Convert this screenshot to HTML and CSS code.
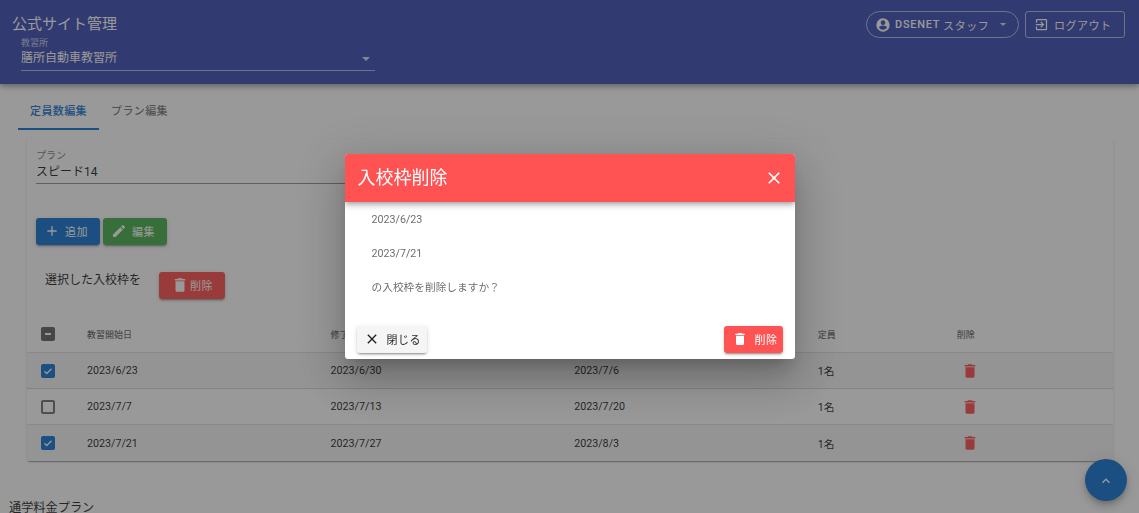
FILE: index.html
```html
<!DOCTYPE html>
<html lang="ja">
<head>
<meta charset="utf-8">
<title>公式サイト管理</title>
<link rel="stylesheet" href="styles.css">
</head>
<body>
<div class="app">
  <header class="appbar">
    <div class="appbar-left">
      <div class="app-title">公式サイト管理</div>
      <div class="select dark">
        <div class="select-label">教習所</div>
        <div class="select-value"><span>膳所自動車教習所</span><i class="caret"></i></div>
      </div>
    </div>
    <div class="appbar-right">
      <button class="pill-btn">
        <svg class="ic16" viewBox="0 0 24 24"><path d="M12 2a10 10 0 1 0 0 20 10 10 0 0 0 0-20zm0 3a3.5 3.5 0 1 1 0 7 3.500 3.500 0 0 1 0-7zm0 14.200a7.200 7.200 0 0 1-6-3.220c.03-2 4-3.080 6-3.080s5.970 1.080 6 3.080a7.200 7.200 0 0 1-6 3.220z"/></svg>
        <b>DSENET</b><span>スタッフ</span><i class="caret small"></i>
      </button>
      <button class="out-btn">
        <svg class="ic15" viewBox="0 0 24 24"><path d="M10.090 15.590 11.500 17l5-5-5-5-1.410 1.410L12.670 11H3v2h9.670l-2.580 2.590zM19 3H5a2 2 0 0 0-2 2v4h2V5h14v14H5v-4H3v4a2 2 0 0 0 2 2h14a2 2 0 0 0 2-2V5a2 2 0 0 0-2-2z"/></svg>
        <span>ログアウト</span>
      </button>
    </div>
  </header>

  <nav class="tabs">
    <a class="tab active">定員数編集</a>
    <a class="tab">プラン編集</a>
  </nav>

  <section class="card">
    <div class="select plan">
      <div class="select-label">プラン</div>
      <div class="select-value"><span>スピード14</span></div>
    </div>
    <div class="btn-row">
      <button class="btn blue"><svg class="ic16" viewBox="0 0 24 24"><path d="M19 13h-6v6h-2v-6H5v-2h6V5h2v6h6v2z"/></svg><span>追加</span></button>
      <button class="btn green"><svg class="ic16" viewBox="0 0 24 24"><path d="M3 17.250V21h3.750L17.810 9.940l-3.750-3.750L3 17.250zM20.710 7.040a1 1 0 0 0 0-1.410l-2.340-2.340a1 1 0 0 0-1.410 0l-1.830 1.830 3.750 3.750 1.830-1.830z"/></svg><span>編集</span></button>
    </div>
    <div class="bulk-row">
      <span class="bulk-text">選択した入校枠を</span>
      <button class="btn red tight"><svg class="ic18" viewBox="0 0 24 24"><path d="M6 19a2 2 0 0 0 2 2h8a2 2 0 0 0 2-2V7H6v12zM19 4h-3.500l-1-1h-5l-1 1H5v2h14V4z"/></svg><span>削除</span></button>
    </div>
    <div class="table">
      <div class="tr th">
        <div class="c-check"><i class="cb dash"></i></div><div class="c-date">教習開始日</div><div class="c-date">修了</div><div class="c-date"></div><div class="c-cap">定員</div><div class="c-del">削除</div>
      </div>
      <div class="tr sel">
        <div class="c-check"><i class="cb on"><svg viewBox="0 0 24 24"><path d="M5 12.500l4.500 4.500L19 7.500"/></svg></i></div><div class="c-date">2023/6/23</div><div class="c-date">2023/6/30</div><div class="c-date">2023/7/6</div><div class="c-cap">1名</div><div class="c-del"><svg class="trash" viewBox="0 0 24 24"><path d="M6 19a2 2 0 0 0 2 2h8a2 2 0 0 0 2-2V7H6v12zM19 4h-3.500l-1-1h-5l-1 1H5v2h14V4z"/></svg></div>
      </div>
      <div class="tr">
        <div class="c-check"><i class="cb"></i></div><div class="c-date">2023/7/7</div><div class="c-date">2023/7/13</div><div class="c-date">2023/7/20</div><div class="c-cap">1名</div><div class="c-del"><svg class="trash" viewBox="0 0 24 24"><path d="M6 19a2 2 0 0 0 2 2h8a2 2 0 0 0 2-2V7H6v12zM19 4h-3.500l-1-1h-5l-1 1H5v2h14V4z"/></svg></div>
      </div>
      <div class="tr sel">
        <div class="c-check"><i class="cb on"><svg viewBox="0 0 24 24"><path d="M5 12.500l4.500 4.500L19 7.500"/></svg></i></div><div class="c-date">2023/7/21</div><div class="c-date">2023/7/27</div><div class="c-date">2023/8/3</div><div class="c-cap">1名</div><div class="c-del"><svg class="trash" viewBox="0 0 24 24"><path d="M6 19a2 2 0 0 0 2 2h8a2 2 0 0 0 2-2V7H6v12zM19 4h-3.500l-1-1h-5l-1 1H5v2h14V4z"/></svg></div>
      </div>
    </div>
  </section>

  <h2 class="section-title">通学料金プラン</h2>
</div>

<button class="fab"><svg viewBox="0 0 24 24"><path d="M7.410 15.410 12 10.830l4.590 4.580L18 14l-6-6-6 6z"/></svg></button>

<div class="overlay">
  <div class="dialog">
    <div class="dialog-head">
      <span class="dialog-title">入校枠削除</span>
      <svg class="close" viewBox="0 0 24 24"><path d="M19 6.410 17.590 5 12 10.590 6.410 5 5 6.410 10.590 12 5 17.590 6.410 19 12 13.410 17.590 19 19 17.590 13.410 12z"/></svg>
    </div>
    <div class="dialog-body">
      <p>2023/6/23</p>
      <p>2023/7/21</p>
      <p>の入校枠を削除しますか？</p>
    </div>
    <div class="dialog-foot">
      <button class="btn plain"><svg class="ic16" viewBox="0 0 24 24"><path d="M19 6.410 17.590 5 12 10.590 6.410 5 5 6.410 10.590 12 5 17.590 6.410 19 12 13.410 17.590 19 19 17.590 13.410 12z"/></svg><span>閉じる</span></button>
      <button class="btn red"><svg class="ic16" viewBox="0 0 24 24"><path d="M6 19a2 2 0 0 0 2 2h8a2 2 0 0 0 2-2V7H6v12zM19 4h-3.500l-1-1h-5l-1 1H5v2h14V4z"/></svg><span>削除</span></button>
    </div>
  </div>
</div>
</body>
</html>
```
FILE: styles.css
```css
* { box-sizing: border-box; }
html, body { margin: 0; height: 100%; overflow: hidden; }
body { font-family: Roboto, "Noto Sans CJK JP", sans-serif; color: rgba(0,0,0,.87); background: #fff; font-size: 12px; }
button { font-family: inherit; border: 0; background: none; color: inherit; padding: 0; }
svg { fill: currentColor; display: block; }
.ic15 { width: 15px; height: 15px; flex: none; }
.ic16 { width: 16px; height: 16px; flex: none; }
.ic18 { width: 18px; height: 18px; flex: none; }

.appbar { height: 84px; background: #3f51b5; color: #fff; display: flex; justify-content: space-between; padding: 11px 14px 0 12px; box-shadow: 0 2px 4px -1px rgba(0,0,0,.2), 0 4px 5px rgba(0,0,0,.14), 0 1px 10px rgba(0,0,0,.12); position: relative; }
.appbar-left { width: 363px; }
.app-title { font-size: 15px; line-height: 27px; }
.select.dark { margin: 0 0 0 9px; border-bottom: 1px solid rgba(255,255,255,.6); height: 33px; }
.select-label { font-size: 9px; line-height: 11px; opacity: .7; }
.select-value { font-size: 12px; line-height: 18px; display: flex; justify-content: space-between; align-items: center; }
.caret { width: 0; height: 0; border-left: 4px solid transparent; border-right: 4px solid transparent; border-top: 4px solid currentColor; margin: 2px 5px 0 0; opacity: .8; }
.caret.small { border-width: 3.500px 3.500px 0; margin: 0 0 0 8px; }
.appbar-right { display: flex; gap: 6px; align-items: flex-start; }
.pill-btn { height: 27px; width: 153px; border: 1px solid rgba(255,255,255,.6); border-radius: 14px; display: flex; align-items: center; gap: 3px; padding-left: 8px; color: #fff; font-size: 11px; }
.pill-btn b { font-weight: 500; letter-spacing: .7px; margin-left: 1px; }
.pill-btn span { letter-spacing: .55px; }
.out-btn { height: 27px; width: 100px; border: 1px solid rgba(255,255,255,.6); border-radius: 3px; display: flex; align-items: center; gap: 5px; padding-left: 8px; color: #fff; font-size: 11px; letter-spacing: .5px; }

.tabs { display: flex; margin: 0 0 0 18px; height: 46px; padding-top: 8px; }
.tab { width: 81px; display: flex; align-items: center; justify-content: center; font-size: 11px; font-weight: 500; letter-spacing: .4px; color: rgba(0,0,0,.54); border-bottom: 2px solid transparent; }
.tab + .tab { width: 93px; padding-right: 12px; }
.tab.active { color: #1976d2; border-bottom-color: #1976d2; }

.card { margin: 9px 26px 0 27px; height: 322px; border-radius: 3px; box-shadow: 0 2px 1px -1px rgba(0,0,0,.2), 0 1px 1px rgba(0,0,0,.14), 0 1px 3px rgba(0,0,0,.12); padding-top: 11px; }
.select.plan { margin-left: 9px; width: 400px; height: 34px; border-bottom: 1px solid rgba(0,0,0,.42); }
.select.plan .select-label { font-size: 10px; line-height: 12px; opacity: .6; }
.select.plan .select-value { font-size: 12px; line-height: 21px; }
.btn-row { display: flex; gap: 3px; margin: 34px 0 0 9px; }
.btn { height: 27px; border-radius: 3px; display: inline-flex; align-items: center; font-size: 11px; letter-spacing: .5px; color: #fff; padding: 0 0 1px 8px; box-shadow: 0 3px 1px -2px rgba(0,0,0,.2), 0 2px 2px rgba(0,0,0,.14), 0 1px 5px rgba(0,0,0,.12); gap: 5px; }
.btn-row .btn { width: 64px; }
.blue { background: #1976d2; }
.green { background: #4caf50; }
.red { background: #ff5252; }
.btn.tight { width: 66px; gap: 1px; padding-left: 12px; }
.bulk-row { display: flex; margin: 27px 0 0 18px; align-items: flex-start; }
.bulk-text { font-size: 12px; line-height: 16px; width: 114px; }
.table { margin-top: 21px; }
.tr { display: flex; align-items: center; height: 36px; border-bottom: 1px solid rgba(0,0,0,.12); font-size: 10.700px; }
.tr:last-child { border-bottom: 0; }
.tr.sel { background: #f5f5f5; }
.tr.th { height: 33px; padding-bottom: 4px; font-size: 9px; font-weight: 500; color: rgba(0,0,0,.6); }
.c-check { width: 60px; padding-left: 14px; flex: none; }
.c-date { width: 243.600px; flex: none; }
.c-cap { width: 139px; flex: none; }
.c-del { width: 26px; flex: none; display: flex; justify-content: center; }
.th .c-del { justify-content: flex-start; }
.cb { display: block; width: 14px; height: 14px; border-radius: 2px; border: 2px solid rgba(0,0,0,.54); position: relative; }
.cb.on { background: #1976d2; border-color: #1976d2; }
.cb.on svg { width: 12px; height: 12px; margin: -1px; fill: none; stroke: #fff; stroke-width: 2.500; }
.cb.dash { background: rgba(0,0,0,.6); border-color: transparent; }
.cb.dash::after { content: ""; display: block; height: 2px; width: 6px; background: #fff; margin: 4px 2px 0; }
.trash { width: 18px; height: 18px; color: #ff5252; }
.section-title { margin: 39px 0 0 9px; font-size: 12.200px; line-height: 16px; font-weight: 400; }

.fab { position: fixed; left: 1085px; top: 459px; width: 42px; height: 42px; border-radius: 50%; background: #1976d2; color: #fff; display: flex; align-items: center; justify-content: center; box-shadow: 0 3px 5px -1px rgba(0,0,0,.2), 0 6px 10px rgba(0,0,0,.14), 0 1px 18px rgba(0,0,0,.12); }
.fab svg { width: 16px; height: 16px; margin-top: 1px; }

.overlay { position: fixed; inset: 0; background: rgba(33,33,33,.46); display: flex; align-items: center; justify-content: center; }
.dialog { width: 450px; height: 205px; background: #fff; border-radius: 3px; overflow: hidden; display: flex; flex-direction: column; box-shadow: 0 11px 15px -7px rgba(0,0,0,.2), 0 24px 38px 3px rgba(0,0,0,.14), 0 9px 46px 8px rgba(0,0,0,.12); }
.dialog-head { height: 48px; flex: none; background: #ff5252; color: #fff; display: flex; align-items: center; justify-content: space-between; padding: 0 11px 0 13px; box-shadow: 0 2px 4px -1px rgba(0,0,0,.2), 0 4px 5px rgba(0,0,0,.14), 0 1px 10px rgba(0,0,0,.12); position: relative; }
.dialog-title { font-size: 18px; margin-bottom: 4px; }
.close { width: 20px; height: 20px; }
.dialog-body { flex: 1; padding: 10px 27px 0; color: rgba(0,0,0,.6); font-size: 10.700px; }
.dialog-body p { margin: 0 0 18px; line-height: 16px; }
.dialog-foot { display: flex; justify-content: space-between; padding: 0 12px 6px; }
.btn.plain { width: 70px; padding-left: 7px; background: #f5f5f5; color: rgba(0,0,0,.87); gap: 7px; }
.dialog-foot .red { width: 59px; gap: 7px; }
```
